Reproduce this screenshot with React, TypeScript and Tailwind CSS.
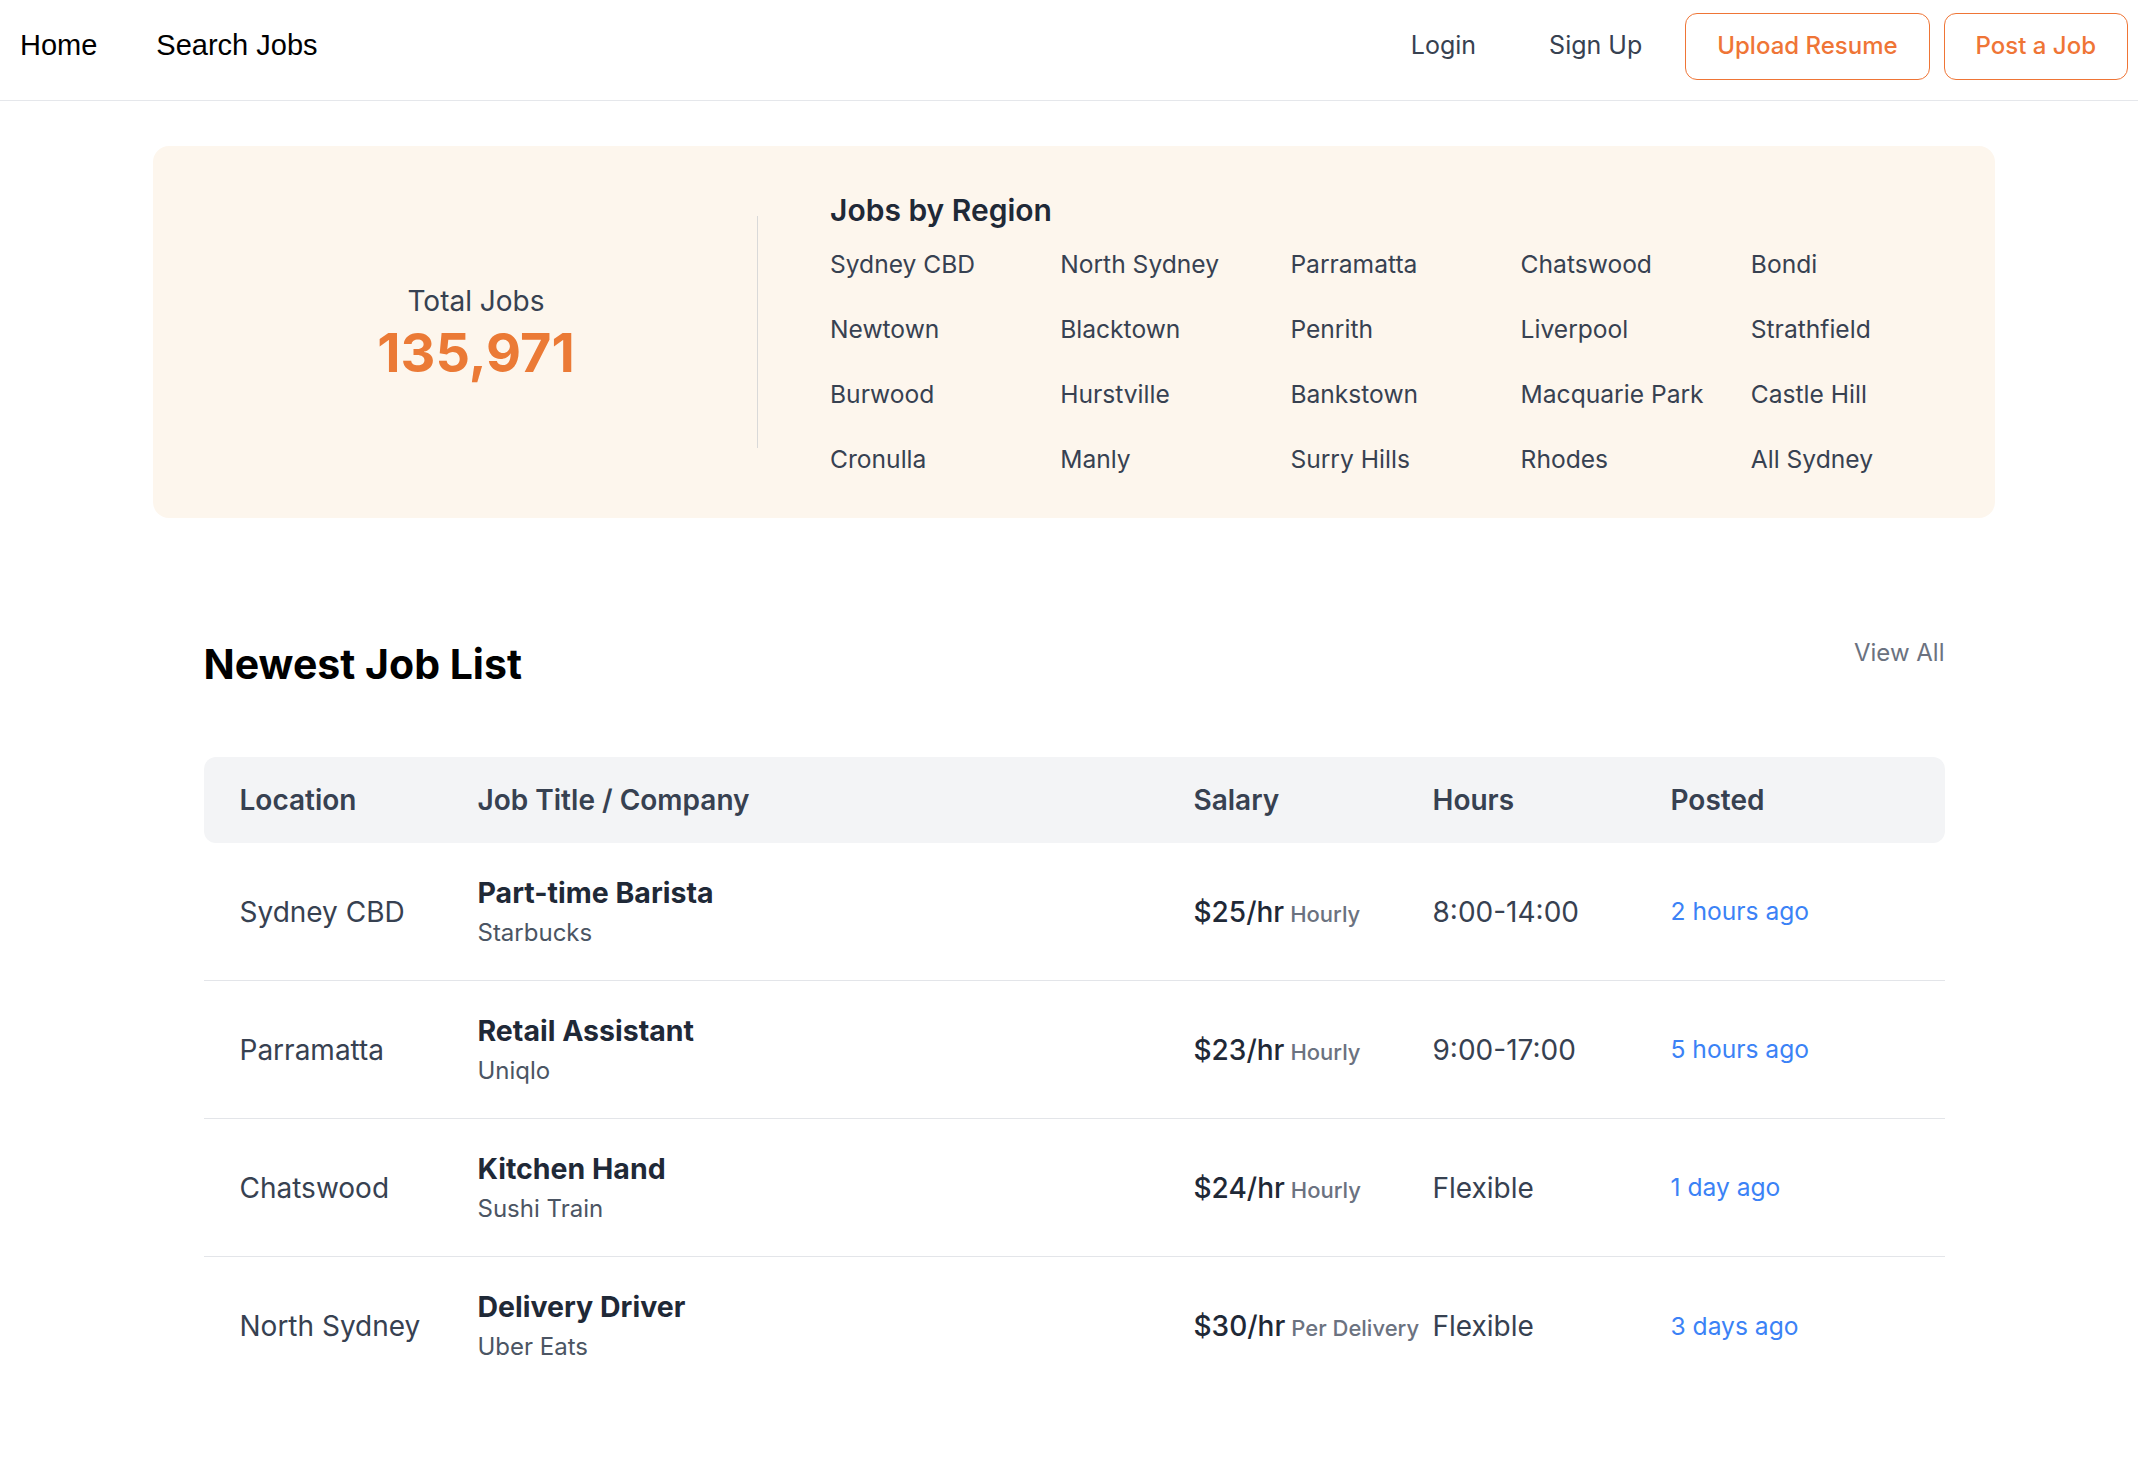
const regions = [
  'Sydney CBD', 'North Sydney', 'Parramatta', 'Chatswood', 'Bondi',
  'Newtown', 'Blacktown', 'Penrith', 'Liverpool', 'Strathfield',
  'Burwood', 'Hurstville', 'Bankstown', 'Macquarie Park', 'Castle Hill',
  'Cronulla', 'Manly', 'Surry Hills', 'Rhodes', 'All Sydney',
];

const jobs = [
  { location: 'Sydney CBD', title: 'Part-time Barista', company: 'Starbucks', salary: '$25/hr', unit: 'Hourly', hours: '8:00-14:00', posted: '2 hours ago' },
  { location: 'Parramatta', title: 'Retail Assistant', company: 'Uniqlo', salary: '$23/hr', unit: 'Hourly', hours: '9:00-17:00', posted: '5 hours ago' },
  { location: 'Chatswood', title: 'Kitchen Hand', company: 'Sushi Train', salary: '$24/hr', unit: 'Hourly', hours: 'Flexible', posted: '1 day ago' },
  { location: 'North Sydney', title: 'Delivery Driver', company: 'Uber Eats', salary: '$30/hr', unit: 'Per Delivery', hours: 'Flexible', posted: '3 days ago' },
];

export default function App() {
  return (
    <div className="min-h-screen bg-white font-['Inter',sans-serif]">
      {/* Top nav */}
      <nav className="h-[101px] border-b border-[#e5e7eb] pb-[8px] flex items-center justify-between">
        <div className="flex items-center pl-[20px] gap-[59px] font-['Liberation_Sans',Arial,sans-serif] text-[29px] text-black">
          <a href="#">Home</a>
          <a href="#">Search Jobs</a>
        </div>
        <div className="flex items-center pr-[10px] text-[25px] text-[#374151]">
          <a href="#">Login</a>
          <a href="#" className="ml-[73px]">Sign Up</a>
          <button className="ml-[43px] h-[67px] px-[31px] rounded-[12px] border border-[#ef7536] text-[#ef7536] text-[24px] font-medium">
            Upload Resume
          </button>
          <button className="ml-[14px] h-[67px] px-[31px] rounded-[12px] border border-[#ef7536] text-[#ef7536] text-[24px] font-medium">
            Post a Job
          </button>
        </div>
      </nav>

      <main className="pl-[10px]">
        {/* Stats card */}
        <section className="mt-[45px] mx-auto w-[1842px] h-[372px] rounded-[16px] bg-[#fdf6ed] flex items-center pl-[42px] pr-[14px]">
          <div className="w-[562px] pb-[5px] flex flex-col items-center">
            <p className="text-[28px] leading-[42px] text-[#374151]">Total Jobs</p>
            <p className="mt-[4px] text-[54px] leading-none font-bold text-[#eb7a36]">135,971</p>
          </div>
          <div className="w-px h-[232px] bg-[#d9d9d9]" />
          <div className="flex-1 pl-[72px] pt-[3px]">
            <h3 className="text-[30px] leading-[40px] font-semibold text-[#1f2937] mb-[15px]">Jobs by Region</h3>
            <div className="grid grid-cols-5 gap-y-[27px]">
              {regions.map((r) => (
                <a key={r} href="#" className="text-[24.6px] leading-[38px] text-[#374151]">
                  {r}
                </a>
              ))}
            </div>
          </div>
        </section>

        {/* Newest jobs */}
        <section className="mx-auto w-[1741px] mt-[120px]">
          <div className="flex items-start justify-between mb-[68px]">
            <h2 className="mt-[1px] text-[41px] leading-[50px] font-bold text-black">Newest Job List</h2>
            <a href="#" className="text-[24px] leading-[30px] text-[#6b7280]">View All</a>
          </div>

          <div className="grid grid-cols-[238px_716px_239px_238px_1fr] items-center h-[86px] pl-[36px] rounded-[12px] bg-[#f3f4f6] text-[28px] font-semibold text-[#374151]">
            <div>Location</div>
            <div>Job Title / Company</div>
            <div>Salary</div>
            <div>Hours</div>
            <div>Posted</div>
          </div>

          {jobs.map((job) => (
            <div
              key={job.title}
              className="grid grid-cols-[238px_716px_239px_238px_1fr] items-center h-[138px] pl-[36px] border-b border-[#e3e5e9] last:border-b-0"
            >
              <div className="text-[28px] text-[#374151]">{job.location}</div>
              <div className="flex flex-col pt-[2px]">
                <span className="text-[28.5px] leading-[36px] font-bold text-[#1f2937]">{job.title}</span>
                <span className="mt-[4px] text-[24px] leading-[36px] text-[#4b5563]">{job.company}</span>
              </div>
              <div className="whitespace-nowrap">
                <span className="text-[28px] font-medium text-[#1f2937]">{job.salary}</span>
                <span className="ml-[6px] text-[22px] font-medium text-[#6b7280]">{job.unit}</span>
              </div>
              <div className="text-[28px] text-[#374151]">{job.hours}</div>
              <div className="text-[24.6px] text-[#3b82f6]">{job.posted}</div>
            </div>
          ))}
        </section>
      </main>
    </div>
  );
}
